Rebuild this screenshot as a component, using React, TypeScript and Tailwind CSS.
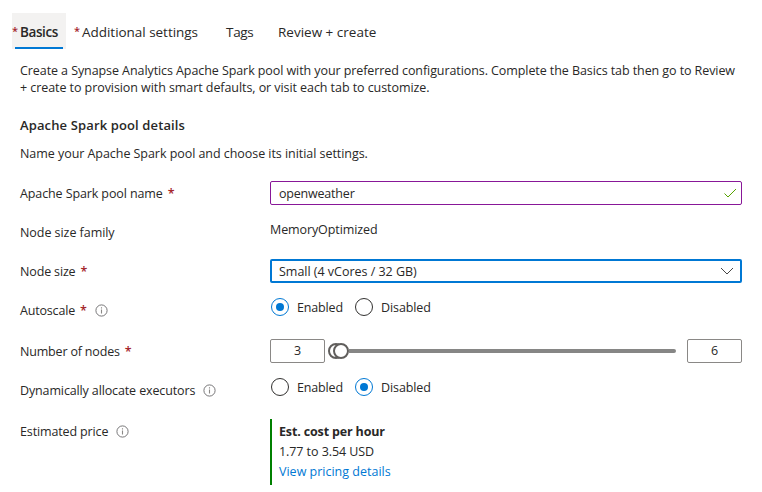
import React from "react";

function Star() {
  return <span className="ml-[5px] font-semibold text-[#a4262c]">*</span>;
}

function InfoIcon() {
  return (
    <svg className="ml-2 mt-px size-[13px] shrink-0" viewBox="0 0 13 13" fill="none">
      <circle cx="6.5" cy="6.5" r="5.6" stroke="#69686a" strokeWidth="0.9" />
      <path d="M6.5 5.4V9.6M6.5 3.3V4.5" stroke="#8a8886" strokeWidth="1.1" />
    </svg>
  );
}

function Row({ label, className, labelClass, required, info, children }: {
  label: string;
  className: string;
  labelClass: string;
  required?: boolean;
  info?: boolean;
  children: React.ReactNode;
}) {
  return (
    <div className={`flex items-start ${className}`}>
      <div className="flex h-6 w-[250px] shrink-0 items-center">
        <span className={labelClass}>{label}</span>
        {required && <Star />}
        {info && <InfoIcon />}
      </div>
      {children}
    </div>
  );
}

function Radio({ label, checked, className, labelClass }: { label: string; checked?: boolean; className: string; labelClass: string }) {
  return (
    <div className={`flex h-[18px] items-center ${className}`}>
      <span className={`flex size-[18px] items-center justify-center rounded-full border ${checked ? "border-[#0078d4]" : "border-[#323130]"}`}>
        {checked && <span className="size-2 rounded-full bg-[#0078d4]" />}
      </span>
      <span className={`ml-2 ${labelClass}`}>{label}</span>
    </div>
  );
}

export default function App() {
  return (
    <main className="h-[492px] w-[762px] overflow-hidden whitespace-nowrap bg-white pl-5 pt-[13px] font-['Open_Sans','Noto_Sans',sans-serif] text-[12.5px] leading-[17px] text-[#292827]">
      <nav className="-ml-2 flex h-9 text-[13.5px] leading-9">
        <div className="flex w-[54px] flex-col bg-[#f3f2f1]">
          <div className="flex h-[34px] pt-px leading-9">
            <span className="w-2 text-[11px] font-semibold leading-[34px] text-[#a4262c]">*</span>
            <span className="font-semibold tracking-[-0.4px]">Basics</span>
          </div>
          <div className="mx-[3px] h-0.5 bg-[#0078d4]" />
        </div>
        <div className="ml-2 flex w-[152px] pt-px">
          <span className="w-2 text-[11px] font-semibold leading-[34px] text-[#a4262c]">*</span>
          <span className="tracking-[-0.03px]">Additional settings</span>
        </div>
        <span className="w-[52px] pt-px tracking-[-0.3px]">Tags</span>
        <span className="pt-px">Review + create</span>
      </nav>
      <p className="mt-[13px]">
        <span className="tracking-[-0.08px]">Create a Synapse Analytics Apache Spark pool with your preferred configurations. Complete the Basics tab then go to Review</span>
        <br />
        <span className="tracking-[-0.07px]">+ create to provision with smart defaults, or visit each tab to customize.</span>
      </p>
      <h1 className="mt-[21px] text-[13px] font-semibold tracking-[0.13px]">Apache Spark pool details</h1>
      <p className="mt-[11px] tracking-[-0.05px]">Name your Apache Spark pool and choose its initial settings.</p>

      <Row label="Apache Spark pool name" required labelClass="tracking-[-0.11px]" className="mt-[19px] h-[39px]">
        <div className="flex h-6 w-[472px] items-center justify-between rounded-xs border border-[#881798] pl-2 pr-1">
          <span className="tracking-[-0.2px]">openweather</span>
          <svg className="h-3 w-[14px]" viewBox="0 0 14 12" fill="none">
            <path d="M1.5 6.5L5 10L13 2" stroke="#57a300" strokeWidth="1" />
          </svg>
        </div>
      </Row>
      <Row label="Node size family" labelClass="tracking-[-0.05px]" className="h-[39px]">
        <span className="mt-px tracking-[-0.1px]">MemoryOptimized</span>
      </Row>
      <Row label="Node size" required labelClass="tracking-[-0.15px]" className="h-[39px]">
        <div className="flex h-6 w-[472px] items-center justify-between rounded-xs border-2 border-[#0078d4] pl-[7px] pr-[6px]">
          <span className="tracking-[-0.02px]">Small (4 vCores / 32 GB)</span>
          <svg className="h-3 w-[14px]" viewBox="0 0 14 12" fill="none">
            <path d="M1 3L7 9L13 3" stroke="#323130" strokeWidth="0.9" />
          </svg>
        </div>
      </Row>
      <Row label="Autoscale" required info labelClass="tracking-[-0.18px]" className="h-[41px]">
        <Radio label="Enabled" checked className="ml-px w-[84px]" labelClass="tracking-[-0.15px]" />
        <Radio label="Disabled" className="" labelClass="tracking-[-0.1px]" />
      </Row>
      <Row label="Number of nodes" required labelClass="tracking-[-0.18px]" className="h-[39px]">
        <div className="flex h-6 items-center">
          <span className="h-6 w-[55px] rounded-xs border border-[#8a8886] text-center leading-[22px]">3</span>
          <div className="ml-[3px] flex w-[348px] items-center">
            <span className="size-4 rounded-full border-2 border-[#605e5c] bg-white" />
            <span className="-ml-[11px] size-4 rounded-full border-2 border-[#605e5c] bg-white" />
            <span className="h-1 flex-1 rounded-r-full bg-[#868685]" />
          </div>
          <span className="ml-[11px] h-6 w-[55px] rounded-xs border border-[#8a8886] text-center leading-[22px]">6</span>
        </div>
      </Row>
      <Row label="Dynamically allocate executors" info labelClass="tracking-[-0.13px]" className="h-[41px]">
        <Radio label="Enabled" className="ml-px w-[84px]" labelClass="tracking-[-0.15px]" />
        <Radio label="Disabled" checked className="" labelClass="tracking-[-0.1px]" />
      </Row>
      <Row label="Estimated price" info labelClass="tracking-[-0.13px]" className="">
        <div className="flex h-[66px] flex-col border-l-2 border-[#008000] pl-[7px] pt-[3px] leading-5">
          <span className="font-bold tracking-[-0.15px]">Est. cost per hour</span>
          <span className="tracking-[-0.07px]">1.77 to 3.54 USD</span>
          <span className="text-[#0078d4]">View pricing details</span>
        </div>
      </Row>
    </main>
  );
}
